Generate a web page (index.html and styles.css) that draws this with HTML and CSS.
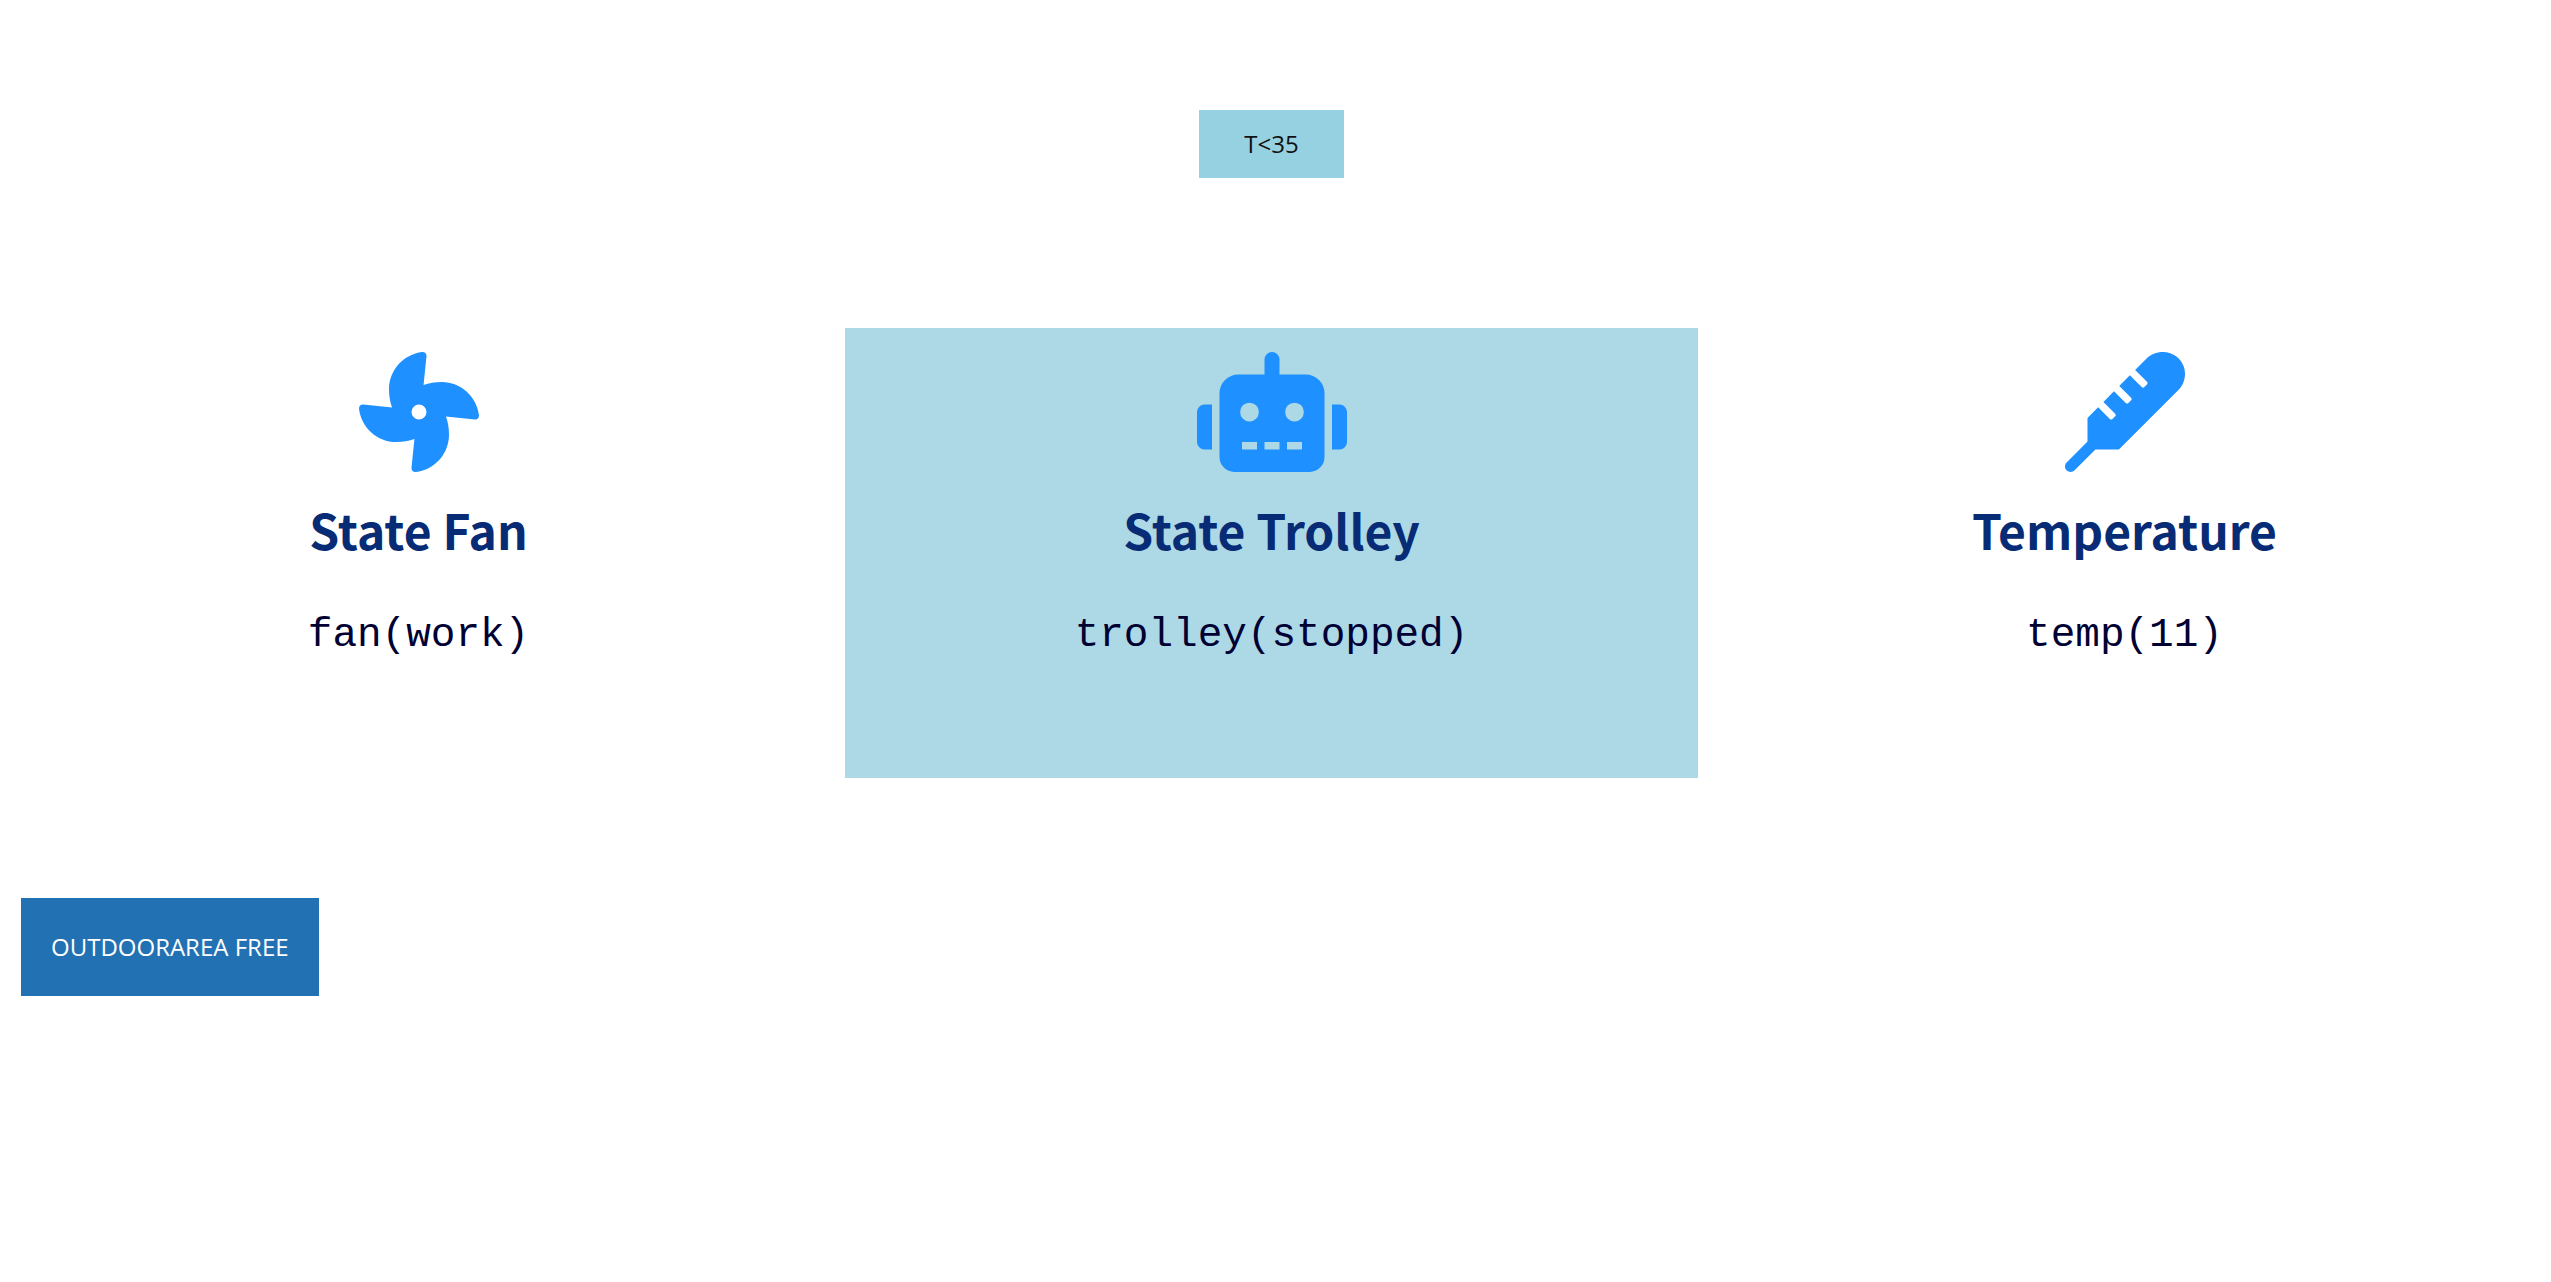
FILE: index.html
```html
<!DOCTYPE html>
<html lang="en">
<head>
<meta charset="utf-8">
<title>Trolley status</title>
<link rel="stylesheet" href="styles.css">
</head>
<body>
<header class="topbar">
  <button type="button" class="threshold">T&lt;35</button>
</header>
<main class="cards">
  <section class="card">
    <svg class="icon" viewBox="0 0 512 512" aria-hidden="true"><path d="M352.57 128c-28.09 0-54.09 4.52-77.06 12.86l12.41-123.11C289 7.31 279.81-1.18 269.33.13 189.63 10.13 128 77.64 128 159.43c0 28.09 4.52 54.09 12.86 77.06L17.75 224.08C7.31 223-1.18 232.19.13 242.67c10 79.7 77.51 141.33 159.3 141.33 28.09 0 54.09-4.52 77.06-12.86l-12.41 123.11c-1.05 10.43 8.11 18.93 18.59 17.62 79.7-10 141.33-77.51 141.33-159.3 0-28.09-4.52-54.09-12.86-77.06l123.11 12.41c10.44 1.05 18.93-8.11 17.62-18.59-10-79.7-77.51-141.33-159.3-141.33zM256 288a32 32 0 1 1 32-32 32 32 0 0 1-32 32z"/></svg>
    <h2 class="title">State Fan</h2>
    <p class="state">fan(work)</p>
  </section>
  <section class="card card-active">
    <svg class="icon" viewBox="0 0 640 512" aria-hidden="true"><path d="M32 224H64V416H32A32 32 0 0 1 0 384V256A32 32 0 0 1 32 224Zm512-48V448a64 64 0 0 1-64 64H160a64 64 0 0 1-64-64V176a80 80 0 0 1 80-80H288V32a32 32 0 0 1 64 0V96H464A80 80 0 0 1 544 176ZM264 256a40 40 0 1 0-40 40A40 40 0 0 0 264 256Zm-8 128H192v32h64Zm96 0H288v32h64ZM456 256a40 40 0 1 0-40 40A40 40 0 0 0 456 256Zm-8 128H384v32h64ZM640 256V384a32 32 0 0 1-32 32H576V224h32A32 32 0 0 1 640 256Z"/></svg>
    <h2 class="title">State Trolley</h2>
    <p class="state">trolley(stopped)</p>
  </section>
  <section class="card">
    <svg class="icon" viewBox="0 0 512 512" aria-hidden="true"><path d="M476.8 20.4c-37.5-30.7-95.5-26.3-131.9 10.2l-45.7 46 50.5 50.5c3.1 3.1 3.1 8.2 0 11.3l-11.3 11.3c-3.1 3.1-8.2 3.1-11.3 0l-50.4-50.5-45.1 45.4 50.3 50.4c3.1 3.1 3.1 8.2 0 11.3l-11.3 11.3c-3.1 3.1-8.2 3.1-11.3 0L209 167.4l-45.1 45.4L214 263c3.1 3.1 3.1 8.2 0 11.3l-11.3 11.3c-3.1 3.1-8.2 3.1-11.3 0l-50.1-50.2L96 281.1V382L7 471c-9.4 9.4-9.4 24.6 0 33.9 9.4 9.4 24.6 9.4 33.9 0l89-89h99.9L484 162.6c34.9-34.9 42.2-101.5-7.2-142.2z"/></svg>
    <h2 class="title">Temperature</h2>
    <p class="state">temp(11)</p>
  </section>
</main>
<footer class="actions">
  <button type="button" class="area">OUTDOORAREA FREE</button>
</footer>
</body>
</html>
```
FILE: styles.css
```css
* {
  box-sizing: border-box;
}

body {
  margin: 0;
  padding: 110px 8px 0 0;
  background: #fff;
  font-family: "Open Sans", "Noto Sans", sans-serif;
  font-size: 24px;
  overflow-x: hidden;
}

button {
  border: 0;
  font: inherit;
  cursor: pointer;
}

.topbar {
  display: flex;
  justify-content: center;
  margin-bottom: 150px;
}

.threshold {
  padding: 16px 45px;
  background: #96d1e2;
  color: #111;
  line-height: 36px;
}

.cards {
  display: grid;
  grid-template-columns: repeat(3, 1fr);
  margin: 0 -8px 120px;
}

.card {
  display: flex;
  flex-direction: column;
  align-items: center;
  min-height: 450px;
  padding: 24px;
}

.card-active {
  background: #add8e6;
}

.icon {
  height: 120px;
  fill: #1e90ff;
}

.title {
  margin: 21px 0 45px;
  color: #072b75;
  font-family: "Noto Sans CJK SC", sans-serif;
  font-size: 48px;
  font-weight: 700;
  line-height: 72px;
}

.state {
  margin: 0;
  color: #003;
  font-family: "Liberation Mono", monospace;
  font-size: 41px;
  line-height: 50px;
}

.actions {
  padding-left: 21px;
}

.area {
  padding: 30px;
  background: #2271b3;
  color: #fff;
  line-height: 38px;
}
```
